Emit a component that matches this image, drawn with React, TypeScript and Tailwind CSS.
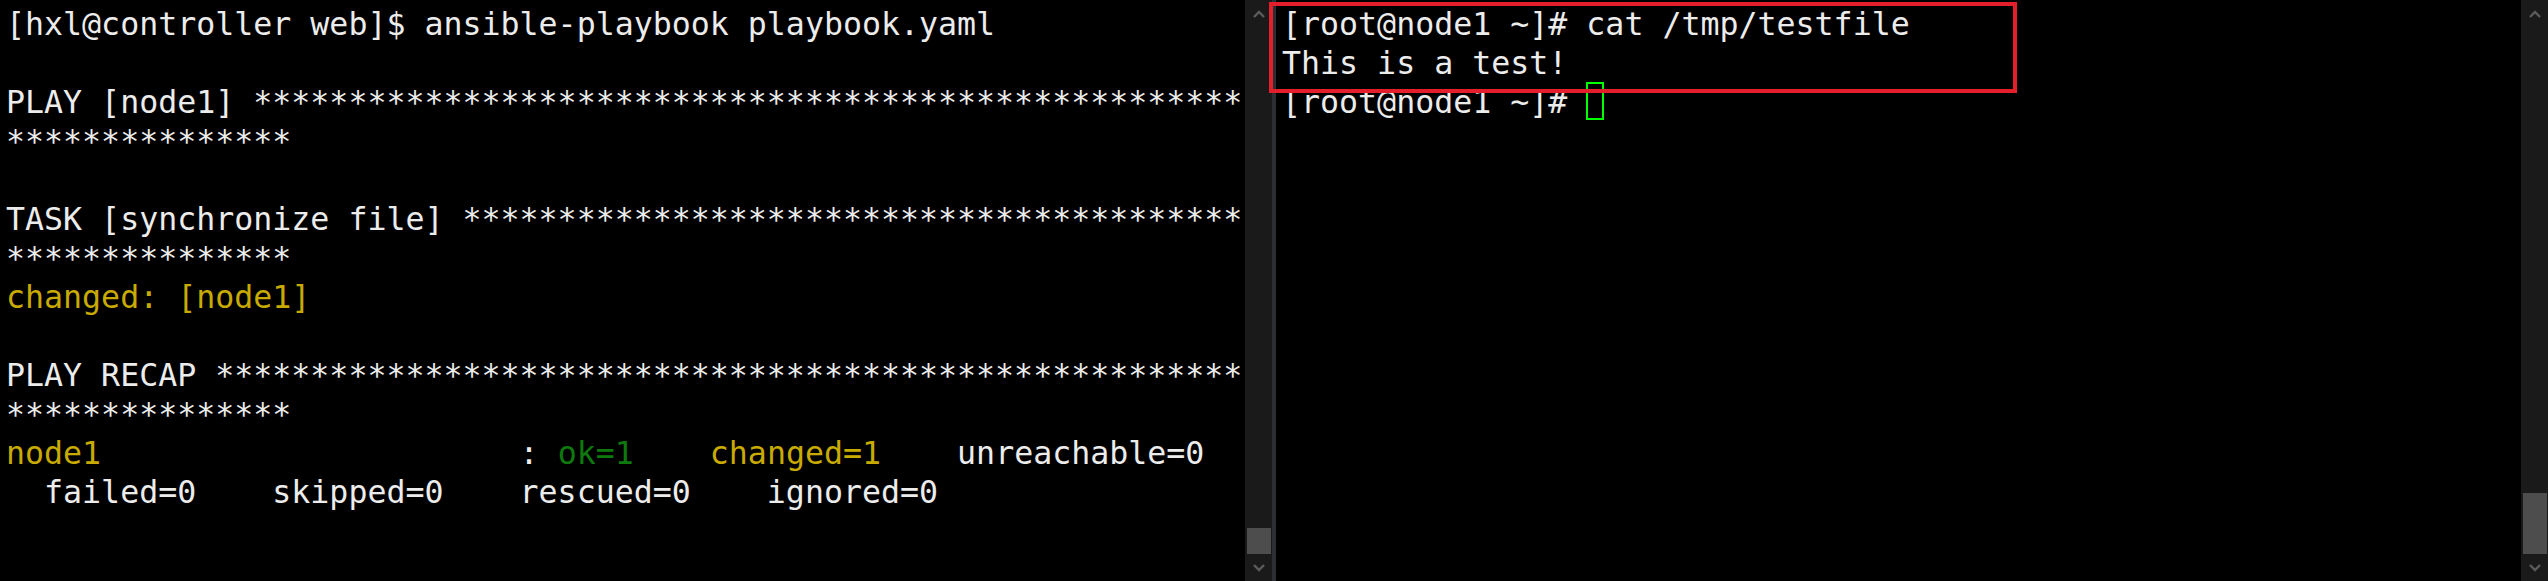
const stars = (n: number) => "*".repeat(n);

const white = "text-[#ececec]";
const yellow = "text-[#c8aa00]";
const green = "text-[#0e7a0e]";

function Chevron({ up }: { up?: boolean }) {
  return (
    <svg width="12" height="8" viewBox="0 0 12 8" className="block">
      <polyline
        points={up ? "1,7 6,2 11,7" : "1,1 6,6 11,1"}
        fill="none"
        stroke="#5c5c5c"
        strokeWidth="2.4"
      />
    </svg>
  );
}

function ScrollBar({ thumbH }: { thumbH: number }) {
  return (
    <div className="w-[27px] h-full bg-[#1a1a1a] flex flex-col items-center shrink-0">
      <div className="h-[26px] flex items-center justify-center pt-[1px]">
        <Chevron up />
      </div>
      <div className="flex-1" />
      <div className="w-[24px] bg-[#4d4d4d]" style={{ height: thumbH }} />
      <div className="h-[27px] flex items-center justify-center">
        <Chevron />
      </div>
    </div>
  );
}

export default function App() {
  const left: { text: string; cls: string }[][] = [
    [{ text: "[hxl@controller web]$ ansible-playbook playbook.yaml", cls: white }],
    [{ text: " ", cls: white }],
    [{ text: "PLAY [node1] " + stars(52), cls: white }],
    [{ text: stars(15), cls: white }],
    [{ text: " ", cls: white }],
    [{ text: "TASK [synchronize file] " + stars(41), cls: white }],
    [{ text: stars(15), cls: white }],
    [{ text: "changed: [node1]", cls: yellow }],
    [{ text: " ", cls: white }],
    [{ text: "PLAY RECAP " + stars(54), cls: white }],
    [{ text: stars(15), cls: white }],
    [
      { text: "node1", cls: yellow },
      { text: "                      : ", cls: white },
      { text: "ok=1", cls: green },
      { text: "    ", cls: white },
      { text: "changed=1", cls: yellow },
      { text: "    unreachable=0", cls: white },
    ],
    [{ text: "  failed=0    skipped=0    rescued=0    ignored=0", cls: white }],
  ];

  return (
    <div className="relative w-[2548px] h-[581px] bg-black flex overflow-hidden font-['DejaVu_Sans_Mono',monospace] text-[31.6px] leading-[39px]">
      {/* left terminal */}
      <div className="w-[1245px] h-full pl-[6px] pt-[5px] whitespace-pre shrink-0">
        {left.map((line, i) => (
          <div key={i} className="h-[39px]">
            {line.map((seg, j) => (
              <span key={j} className={seg.cls}>
                {seg.text}
              </span>
            ))}
          </div>
        ))}
      </div>
      <ScrollBar thumbH={26} />
      <div className="w-[4px] h-full bg-[#2b2e34] shrink-0" />

      {/* right terminal */}
      <div className="w-[1245px] h-full pl-[6px] pt-[5px] whitespace-pre shrink-0">
        <div className={`h-[39px] ${white}`}>[root@node1 ~]# cat /tmp/testfile</div>
        <div className={`h-[39px] ${white}`}>This is a test!</div>
        <div className={`h-[39px] ${white}`}>
          [root@node1 ~]# <span className="inline-block align-top mt-[-1px] w-[18px] h-[38px] border-2 border-[#00ff00]" />
        </div>
      </div>
      <ScrollBar thumbH={61} />

      {/* annotation box */}
      <div className="absolute left-[1269px] top-[2px] w-[748px] h-[91px] border-4 border-[#e41e2a]" />
    </div>
  );
}
